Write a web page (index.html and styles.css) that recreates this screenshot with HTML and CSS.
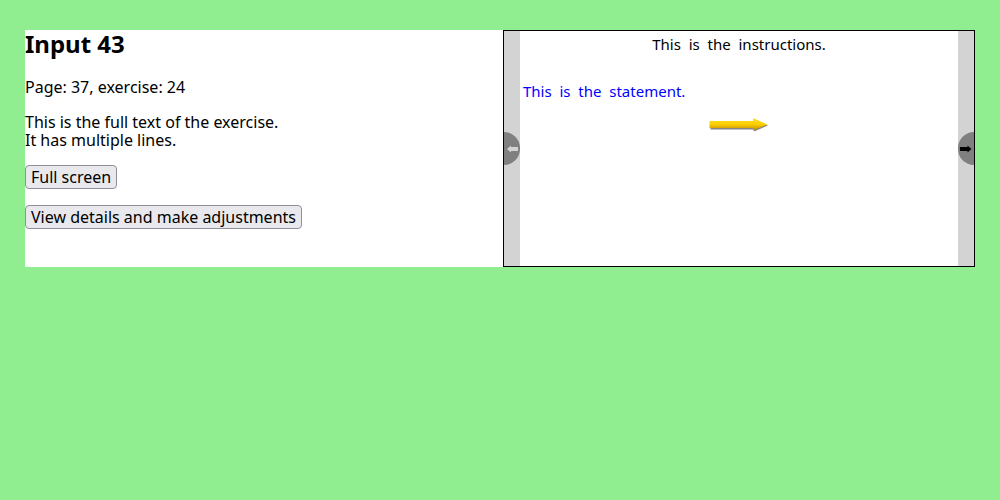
FILE: index.html
```
<!DOCTYPE html>
<html lang="en">
<head>
<meta charset="utf-8">
<title>Input 43</title>
<link rel="stylesheet" href="styles.css">
</head>
<body>
<main class="layout">
  <section class="details">
    <h1 class="title">Input 43</h1>
    <p class="location">Page: 37, exercise: 24</p>
    <p class="text">This is the full text of the exercise.<br>It has multiple lines.</p>
    <p class="text"><button type="button" class="action">Full screen</button></p>
    <p class="text"><button type="button" class="action">View details and make adjustments</button></p>
  </section>
  <section class="preview">
    <button type="button" class="pager" aria-label="Previous page" disabled>
      <span class="knob knob-left">
        <svg class="knob-icon" viewBox="0 0 12 8"><path d="M0 4 4 0.500v1.500h7v4H4v1.500z" fill="#d3d3d3"/></svg>
      </span>
    </button>
    <div class="exercise">
      <p class="instructions">This  is  the  instructions.</p>
      <div class="page">
        <p class="statement">This  is  the  statement.</p>
        <svg class="arrow" viewBox="0 0 60 16" role="img" aria-label="Arrow">
          <defs>
            <linearGradient id="gold" x1="0" y1="0" x2="0" y2="1">
              <stop offset="0" stop-color="#ffe02a"/>
              <stop offset="0.5" stop-color="#fcd000"/>
              <stop offset="0.75" stop-color="#e0ae00"/>
              <stop offset="1" stop-color="#b08400"/>
            </linearGradient>
            <filter id="soft" x="-10%" y="-30%" width="120%" height="160%">
              <feGaussianBlur stdDeviation="0.7"/>
            </filter>
          </defs>
          <path d="M1.500 5.500H45V2.500l14 6-14 6V12.500H1.500z" fill="#555" opacity=".7" filter="url(#soft)"/>
          <path d="M.5 4H44V1l14.500 6.500L44 13.500V11H.5z" fill="url(#gold)"/>
        </svg>
      </div>
    </div>
    <button type="button" class="pager" aria-label="Next page">
      <span class="knob knob-right">
        <svg class="knob-icon" viewBox="0 0 12 8"><path d="M11.500 4 7.500 0.500V2H0v4h7.500v1.500z" fill="#000"/></svg>
      </span>
    </button>
  </section>
</main>
</body>
</html>
```
FILE: styles.css
```
* { box-sizing: border-box; }
body {
  margin: 0;
  padding: 30px 25px;
  background: #90ee90;
  color: #000;
  font-family: "Noto Sans", sans-serif;
  font-size: 16px;
  line-height: 18px;
}
.layout {
  display: grid;
  grid-template-columns: minmax(0, 1fr) 472px;
  background: #fff;
}
.details { padding-bottom: 22px; }
.title { margin: 0 0 20px; font-size: 24px; line-height: 28px; }
.location { margin: 0 0 17px; }
.text { margin: 0 0 16px; }
.action {
  display: block;
  padding: 0 5px;
  border: 1px solid #8f8f9d;
  border-radius: 4px;
  background: #e9e9ed;
  color: #000;
  font: inherit;
  line-height: 22px;
}
.preview {
  display: grid;
  grid-template-columns: 16px minmax(0, 1fr) 16px;
  border: 1px solid #000;
}
.pager {
  display: flex;
  align-items: center;
  padding: 0;
  border: 0;
  overflow: hidden;
  background: #d3d3d3;
}
.knob {
  display: flex;
  align-items: center;
  flex: none;
  width: 16px;
  height: 33px;
  background: #808080;
}
.knob-left { border-radius: 0 16px 16px 0; padding-left: 3px; }
.knob-right { border-radius: 16px 0 0 16px; padding-left: 2px; }
.knob-icon { width: 12px; height: 8px; }
.exercise { font-size: 15px; padding: 3px; }
.instructions,
.statement { margin: 0; line-height: 20px; white-space: pre-wrap; }
.instructions { text-align: center; }
.page { display: flex; flex-direction: column; padding-top: 27px; }
.statement { color: #00f; }
.arrow { align-self: center; width: 60px; height: 16px; margin-top: 16px; }
```
